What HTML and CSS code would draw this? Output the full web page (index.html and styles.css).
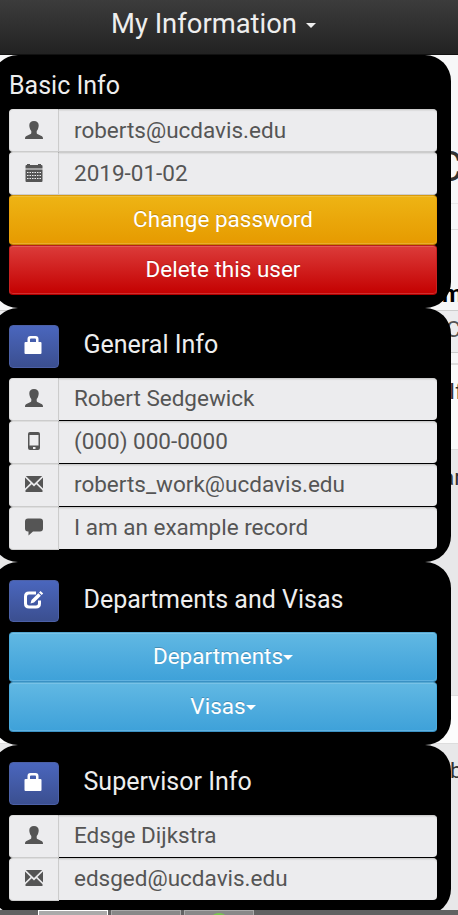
FILE: index.html
```html
<!DOCTYPE html>
<html lang="en">
<head>
<meta charset="utf-8">
<title>My Information</title>
<link rel="stylesheet" href="styles.css">
</head>
<body>
<svg class="defs" aria-hidden="true">
  <symbol id="user" viewBox="0 0 18 18"><path d="M9 0C6 0 4.300 1.600 4.300 4.300c0 1.200.2 2.100.5 2.900.2 1.100.8 2 1.500 2.700v1.800c0 .8-.4 1.200-1.200 1.600l-3.100 1.400C.4 15.400 0 16 0 18h18c0-2-.4-2.600-2-3.300l-3.100-1.400c-.8-.4-1.200-.8-1.200-1.600V9.900c.7-.7 1.300-1.600 1.500-2.700.3-.8.5-1.700.5-2.900C13.700 1.600 12 0 9 0z"/></symbol>
  <symbol id="calendar" viewBox="0 0 18 18"><path d="M.5 4.500V2q0-1 1-1H2V0h3v1h8V0h3v1h.5q1 0 1 1v2.500zM.5 5.500h17V17q0 1-1 1h-15q-1 0-1-1z"/><path d="M2 8.500h14M2 11.500h14M2 14.500h14" fill="none" stroke="#ececee" stroke-width="1.100" stroke-dasharray="1.500 1"/></symbol>
  <symbol id="phone" viewBox="0 0 18 18"><path fill-rule="evenodd" d="M5 0h8q2 0 2 2v14q0 2-2 2H5q-2 0-2-2V2q0-2 2-2zM4.500 3v10.500h9V3zM8 15v2h2.500v-2z"/></symbol>
  <symbol id="mail" viewBox="0 0 18 16"><path d="M.8 0h16.400L9 8zM0 1.500 5.600 7 0 12.500zM18 1.500 12.400 7 18 12.500zM.5 16v-1.700L6.700 8.200 9 10.400l2.300-2.200 6.200 6.100V16z"/></symbol>
  <symbol id="comment" viewBox="0 0 18 17"><path d="M3 0h12q3 0 3 3v7q0 3-3 3H8l-4.500 4V13H3q-3 0-3-3V3q0-3 3-3z"/></symbol>
  <symbol id="lock" viewBox="0 0 17 18"><path fill-rule="evenodd" d="M3 6V3q0-3 3-3h5q3 0 3 3v3h2q1 0 1 1v10q0 1-1 1H1q-1 0-1-1V7q0-1 1-1zM5.500 6h6V3.500q0-1-1-1h-4q-1 0-1 1z"/></symbol>
  <symbol id="edit" viewBox="0 0 20 18"><path d="M12 2H5Q1.500 2 1.500 5.500v7Q1.500 16 5 16h7q3.500 0 3.500-3.500V9.500" fill="none" stroke="#fff" stroke-width="3"/><path d="m6.500 12.500 1-3.500 6.800-6.800 2.600 2.600-6.900 6.800zM15 1.500 16.500 0 19.200 2.600 17.700 4.100z"/></symbol>
</svg>
<div class="screen">
  <div class="backdrop" aria-hidden="true">
    <div class="band band-title">C</div>
    <div class="band band-tools"></div>
    <div class="band band-label">m</div>
    <div class="band band-field">C</div>
    <div class="band band-gap"></div>
    <div class="band band-note">If</div>
    <div class="band band-body">ar</div>
    <div class="band band-white"></div>
    <div class="band band-foot">b</div>
  </div>
  <header class="navbar">My Information<span class="caret"></span></header>
  <main class="panels">
    <section class="panel basic">
      <h2>Basic Info</h2>
      <div class="row plain"><span class="addon"><svg><use href="#user"/></svg></span><span class="value">roberts@ucdavis.edu</span></div>
      <div class="row plain"><span class="addon"><svg><use href="#calendar"/></svg></span><span class="value">2019-01-02</span></div>
      <button class="btn warning">Change password</button>
      <button class="btn danger">Delete this user</button>
    </section>
    <section class="panel general">
      <div class="heading"><button class="square"><svg><use href="#lock"/></svg></button><h2>General Info</h2></div>
      <div class="row"><span class="addon"><svg><use href="#user"/></svg></span><span class="value">Robert Sedgewick</span></div>
      <div class="row"><span class="addon"><svg><use href="#phone"/></svg></span><span class="value">(000) 000-0000</span></div>
      <div class="row"><span class="addon"><svg><use href="#mail"/></svg></span><span class="value">roberts_work@ucdavis.edu</span></div>
      <div class="row"><span class="addon"><svg><use href="#comment"/></svg></span><span class="value">I am an example record</span></div>
    </section>
    <section class="panel visas">
      <div class="heading"><button class="square"><svg class="wide"><use href="#edit"/></svg></button><h2>Departments and Visas</h2></div>
      <button class="btn info">Departments<span class="caret"></span></button>
      <button class="btn info">Visas<span class="caret"></span></button>
    </section>
    <section class="panel supervisor">
      <div class="heading"><button class="square"><svg><use href="#lock"/></svg></button><h2>Supervisor Info</h2></div>
      <div class="row"><span class="addon"><svg><use href="#user"/></svg></span><span class="value">Edsge Dijkstra</span></div>
      <div class="row"><span class="addon"><svg><use href="#mail"/></svg></span><span class="value">edsged@ucdavis.edu</span></div>
    </section>
  </main>
  <footer class="taskbar"><i class="active"></i><i></i><i><b></b></i></footer>
</div>
</body>
</html>
```
FILE: styles.css
```css
* { box-sizing: border-box; }
body { margin: 0; font-family: Roboto, "Liberation Sans", sans-serif; font-size: 22.5px; }
svg { width: 18px; height: 18px; fill: currentColor; }
svg.wide { width: 20px; }
svg.defs { position: absolute; width: 0; height: 0; }
.screen { position: relative; display: flex; flex-direction: column; width: 458px; height: 915px; overflow: hidden; }

.navbar {
  flex: none; display: flex; align-items: center; height: 55px;
  padding: 0 0 7px 111px; font-size: 27.400px; color: #eee;
  background: linear-gradient(#3c3c3c, #222); border-bottom: 1px solid #111;
}
.caret { border: 5px solid transparent; border-top-color: currentColor; border-bottom: 0; }
.navbar .caret { margin: 3px 0 0 9px; }

.backdrop { position: absolute; z-index: -1; inset: 55px 0 0; color: #333; }
.band { overflow: hidden; white-space: nowrap; background: #f7f7f8; }
.band-title { height: 149px; padding: 84px 0 0 435px; font-size: 43px; line-height: 54px; border-bottom: 1px solid #e8e8e8; }
.band-tools { height: 26px; border-bottom: 1px solid #ddd; }
.band-label { height: 80px; padding: 49px 0 0 442px; font-size: 24px; font-weight: bold; line-height: 30px; color: #000; }
.band-field { height: 43px; padding-left: 446px; line-height: 37px; color: #555; background: #ececee; border: solid #ccc; border-width: 1px 0; }
.band-gap { height: 12px; border-bottom: 2px solid #ddd; }
.band-note { height: 85px; padding: 9px 0 0 449px; line-height: 34px; background: #fafafa; border-bottom: 1px solid #ddd; }
.band-body { height: 245px; padding: 10px 0 0 442px; line-height: 34px; background: #e8e8e9; }
.band-white { height: 49px; background: #fcfcfc; border: solid #ddd; border-width: 1px 0; }
.band-foot { height: 171px; padding: 9px 0 0 450px; line-height: 34px; background: #e8e8e9; }

.panels { flex: none; height: 855px; margin: 0 7px 0 -8px; overflow: hidden; }
.panel { padding: 17px 14px 0 17px; background: #000; border-radius: 26px; }
.basic { height: 253px; padding-top: 14px; }
.general { height: 254px; }
.visas { height: 183px; }
.supervisor { height: 170px; }
h2 { margin: 0; font-size: 25px; font-weight: 400; color: #eee; }
.basic h2 { height: 40px; line-height: 34px; }
.heading { display: flex; gap: 24.5px; height: 53px; }
.heading h2 { line-height: 40px; }
.visas .heading { padding-top: 1px; }
.visas .square { height: 42px; padding-right: 0; }
.square {
  display: flex; align-items: center; justify-content: center; width: 50px; height: 43px; padding: 0 2px 3px 0;
  border: 1px solid #4c60a6; border-radius: 4px; color: #fff; background: linear-gradient(#4a66bd, #3b4f90);
}

.row { display: flex; height: 43px; color: #555; }
.addon {
  display: flex; align-items: center; justify-content: center; flex: none; width: 50px; padding-bottom: 3px;
  background: #ececee; border: 1px solid #ccc; border-left-color: #ddd; border-top-color: #ddd; border-radius: 4px 0 0 4px;
}
.value {
  flex: 1; height: 42px; padding-left: 15px; line-height: 39px; background: #ececee;
  border-top: 1px solid #ccc; border-radius: 0 4px 4px 0; box-shadow: inset 0 1px 1px #ddd;
}
.plain .addon { padding-bottom: 1px; }
.plain .value { height: 43px; line-height: 41px; border-bottom: 1px solid #ccc; }

.btn {
  display: block; width: 100%; height: 50px; padding: 0 0 2px; border: 1px solid; border-radius: 4px;
  font: inherit; color: #fff; text-shadow: 0 -1px 0 rgba(0, 0, 0, 0.2);
  box-shadow: inset 0 1px 0 rgba(255, 255, 255, 0.15), inset 0 -1px 0 rgba(255, 255, 255, 0.18);
}
.btn .caret { display: inline-block; vertical-align: 4px; }
.warning { background: linear-gradient(#eeb414, #e69a00); border-color: #d99a0a #e9a20a #c98500; }
.danger { background: linear-gradient(#dc3c3a, #c40000); border-color: #b51f1f #c92020 #b00000; }
.info { background: linear-gradient(#61b8e3, #3ea1d9); border-color: #55a9d3 #4aabdd #3a91c4; }

.taskbar { flex: none; display: flex; gap: 3px; height: 5px; padding-left: 38px; background: #626262; }
.taskbar i { width: 70px; height: 5px; overflow: hidden; background: #888; border: solid #aaa; border-width: 1px 1px 0; }
.taskbar .active { background: #aaa; border-color: #fff; }
.taskbar b { display: block; width: 14px; height: 8px; margin: 2px auto 0; border-radius: 50%; background: #79c253; }
```
